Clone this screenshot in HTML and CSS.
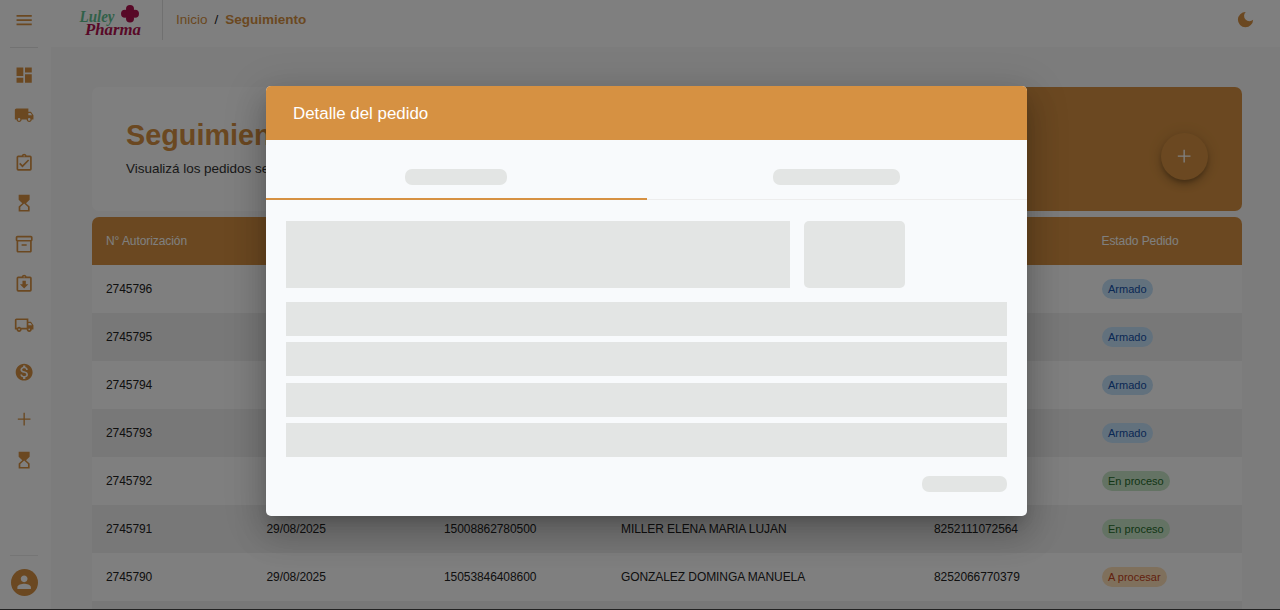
FILE: index.html
```html
<!DOCTYPE html>
<html lang="es">
<head>
<meta charset="utf-8">
<title>Seguimiento</title>
<link rel="stylesheet" href="styles.css">
</head>
<body>
<div class="app">
  <aside class="sidebar">
    <div class="menu"><svg class="icon" viewBox="0 0 24 24"><path d="M3 18h18v-2H3v2zm0-5h18v-2H3v2zm0-7v2h18V6H3z"/></svg></div>
    <nav class="nav">
      <a class="nav-item"><svg class="icon" viewBox="0 0 24 24"><path d="M3 13h8V3H3v10zm0 8h8v-6H3v6zm10 0h8V11h-8v10zm0-18v6h8V3h-8z"/></svg></a>
      <a class="nav-item"><svg class="icon" viewBox="0 0 24 24"><path d="M20 8h-3V4H3c-1.100 0-2 .9-2 2v11h2c0 1.660 1.340 3 3 3s3-1.340 3-3h6c0 1.660 1.340 3 3 3s3-1.340 3-3h2v-5l-3-4zM6 18.500c-.83 0-1.500-.67-1.500-1.500s.67-1.500 1.500-1.500 1.500.67 1.500 1.500-.67 1.500-1.500 1.500zm13.500-9l1.960 2.500H17V9.500h2.500zm-1.500 9c-.83 0-1.500-.67-1.500-1.500s.67-1.500 1.500-1.500 1.500.67 1.500 1.500-.67 1.500-1.500 1.500z"/></svg></a>
      <a class="nav-item group"><svg class="icon" viewBox="0 0 24 24"><path d="M18 9l-1.400-1.400-6.600 6.600-2.600-2.600L6 13l4 4zM19 3h-4.180C14.400 1.840 13.300 1 12 1s-2.400.84-2.820 2H5a2 2 0 0 0-2 2v14a2 2 0 0 0 2 2h14a2 2 0 0 0 2-2V5a2 2 0 0 0-2-2zm-7-.25a.75.75 0 1 1 0 1.500.75.75 0 0 1 0-1.500zM19 19H5V5h14v14z"/></svg></a>
      <a class="nav-item"><svg class="icon" viewBox="0 0 24 24"><path fill-rule="evenodd" d="M5.500 2v6l4.300 4-4.300 4v6h13v-6l-4.300-4 4.300-4V2h-13zm11 14.700V20h-9v-3.300l4.500-4.200 4.500 4.200z"/></svg></a>
      <a class="nav-item"><svg class="icon" viewBox="0 0 24 24"><path fill-rule="evenodd" d="M20 2H4c-1 0-2 .9-2 2v3.010c0 .72.430 1.340 1 1.690V20c0 1.100 1.100 2 2 2h14c.9 0 2-.9 2-2V8.700c.57-.35 1-.97 1-1.690V4c0-1.100-1-2-2-2zm-1 18H5V9h14v11zm1-13H4V4h16v3zM9 12h6v2H9z"/></svg></a>
      <a class="nav-item"><svg class="icon" viewBox="0 0 24 24"><path d="M17 12h-3V8h-4v4H7l5 5 5-5zM19 3h-4.180C14.400 1.840 13.300 1 12 1s-2.400.84-2.820 2H5a2 2 0 0 0-2 2v14a2 2 0 0 0 2 2h14a2 2 0 0 0 2-2V5a2 2 0 0 0-2-2zm-7-.25a.75.75 0 1 1 0 1.500.75.75 0 0 1 0-1.500zM19 19H5V5h14v14z"/></svg></a>
      <a class="nav-item"><svg class="icon" viewBox="0 0 24 24"><path d="M20 8h-3V4H3c-1.100 0-2 .9-2 2v11h2c0 1.660 1.340 3 3 3s3-1.340 3-3h6c0 1.660 1.340 3 3 3s3-1.340 3-3h2v-5l-3-4zm-.5 1.500l1.960 2.500H17V9.500h2.500zM6 18c-.55 0-1-.45-1-1s.45-1 1-1 1 .45 1 1-.45 1-1 1zm2.220-3c-.55-.61-1.330-1-2.220-1s-1.670.39-2.220 1H3V6h12v9H8.220zM18 18c-.55 0-1-.45-1-1s.45-1 1-1 1 .45 1 1-.45 1-1 1z"/></svg></a>
      <a class="nav-item group"><svg class="icon" viewBox="0 0 24 24"><path d="M12 2C6.480 2 2 6.480 2 12s4.480 10 10 10 10-4.480 10-10S17.520 2 12 2zm1.410 16.090V20h-2.670v-1.930c-1.710-.36-3.160-1.460-3.270-3.400h1.960c.1 1.050.82 1.870 2.650 1.870 1.960 0 2.400-.98 2.400-1.590 0-.83-.44-1.610-2.670-2.140-2.480-.6-4.180-1.620-4.180-3.670 0-1.720 1.390-2.840 3.110-3.210V4h2.670v1.950c1.860.45 2.790 1.860 2.850 3.390H14.300c-.05-1.110-.64-1.870-2.220-1.870-1.500 0-2.400.68-2.400 1.640 0 .84.65 1.390 2.670 1.910s4.180 1.390 4.180 3.910c-.01 1.830-1.380 2.830-3.120 3.160z"/></svg></a>
      <a class="nav-item group"><svg class="icon" viewBox="0 0 24 24"><path d="M19.500 12.800h-6.700v6.700h-1.600v-6.700H4.500v-1.600h6.700V4.500h1.600v6.700h6.700v1.600z"/></svg></a>
      <a class="nav-item"><svg class="icon" viewBox="0 0 24 24"><path fill-rule="evenodd" d="M5.500 2v6l4.300 4-4.300 4v6h13v-6l-4.300-4 4.300-4V2h-13zm11 14.700V20h-9v-3.300l4.500-4.200 4.500 4.200z"/></svg></a>
    </nav>
    <div class="profile"><div class="avatar"><svg class="icon" viewBox="0 0 24 24"><path d="M12 12c2.210 0 4-1.790 4-4s-1.790-4-4-4-4 1.790-4 4 1.790 4 4 4zm0 2c-2.670 0-8 1.340-8 4v2h16v-2c0-2.660-5.330-4-8-4z"/></svg></div></div>
  </aside>
  <div class="content">
    <header class="topbar">
      <div class="brand">
        <svg class="logo" viewBox="0 0 66 40" width="66" height="40">
          <text class="logo-luley" x="1.500" y="21.500" textLength="35" lengthAdjust="spacingAndGlyphs">Luley</text>
          <text class="logo-pharma" x="7" y="35" textLength="56" lengthAdjust="spacingAndGlyphs">Pharma</text>
          <g class="logo-cross"><circle cx="52" cy="9" r="4"/><circle cx="52" cy="18.500" r="4"/><circle cx="47" cy="13.700" r="4"/><circle cx="57" cy="13.700" r="4"/><circle cx="52" cy="13.700" r="4"/></g>
        </svg>
      </div>
      <div class="crumbs"><span class="crumb">Inicio</span><span class="slash">/</span><b class="crumb">Seguimiento</b></div>
      <svg class="moon" viewBox="0 0 17 17"><path d="M8.700 1.050A7.600 7.600 0 1 0 16.100 8.700A5.200 5.200 0 0 1 8.700 1.050z"/></svg>
    </header>
    <main class="main">
      <section class="hero">
        <div class="hero-text"><h1>Seguimiento</h1><p>Visualizá los pedidos según su estado</p></div>
        <div class="hero-art"><button class="fab"><svg viewBox="0 0 24 24"><path d="M19.500 12.800h-6.700v6.700h-1.600v-6.700H4.500v-1.600h6.700V4.500h1.600v6.700h6.700v1.600z"/></svg></button></div>
      </section>
      <section class="table">
        <div class="row head"><span>N° Autorización</span><span></span><span></span><span></span><span></span><span>Estado Pedido</span></div>
        <div class="row"><span>2745796</span><span></span><span></span><span></span><span></span><span><i class="chip blue">Armado</i></span></div>
        <div class="row alt"><span>2745795</span><span></span><span></span><span></span><span></span><span><i class="chip blue">Armado</i></span></div>
        <div class="row"><span>2745794</span><span></span><span></span><span></span><span></span><span><i class="chip blue">Armado</i></span></div>
        <div class="row alt"><span>2745793</span><span></span><span></span><span></span><span></span><span><i class="chip blue">Armado</i></span></div>
        <div class="row"><span>2745792</span><span></span><span></span><span></span><span></span><span><i class="chip green">En proceso</i></span></div>
        <div class="row alt"><span>2745791</span><span>29/08/2025</span><span>15008862780500</span><span>MILLER ELENA MARIA LUJAN</span><span>8252111072564</span><span><i class="chip green">En proceso</i></span></div>
        <div class="row"><span>2745790</span><span>29/08/2025</span><span>15053846408600</span><span>GONZALEZ DOMINGA MANUELA</span><span>8252066770379</span><span><i class="chip orange">A procesar</i></span></div>
        <div class="row alt"></div>
      </section>
    </main>
  </div>
</div>
<div class="backdrop">
  <div class="dialog">
    <div class="dialog-title">Detalle del pedido</div>
    <div class="tabs">
      <div class="tab active"><div class="skeleton pill first"></div></div>
      <div class="tab"><div class="skeleton pill second"></div></div>
    </div>
    <div class="dialog-body">
      <div class="summary"><div class="skeleton wide"></div><div class="skeleton square"></div></div>
      <div class="lines"><div class="skeleton line"></div><div class="skeleton line"></div><div class="skeleton line"></div><div class="skeleton line"></div></div>
      <div class="actions"><div class="skeleton pill action"></div></div>
    </div>
  </div>
</div>
</body>
</html>
```
FILE: styles.css
```css
* { box-sizing: border-box; }
body { margin: 0; height: 610px; overflow: hidden; font-family: "Liberation Sans", Arial, sans-serif; color: #212121; }
.app { display: flex; height: 610px; background: #fff; }
.sidebar { width: 51px; display: flex; flex-direction: column; padding-right: 3px; }
.icon { width: 20.3px; height: 20.3px; display: block; fill: #d69142; }
.menu { height: 48px; display: flex; justify-content: center; padding-top: 9.500px; margin: 0 10px; border-bottom: 1px solid #e4e4e4; }
.nav { padding-top: 6.500px; }
.nav-item { height: 40.6px; display: flex; align-items: center; justify-content: center; }
.nav-item.group { margin-top: 6.700px; }
.profile { margin: auto 10px 0; height: 55px; padding-top: 13px; border-top: 1px solid #eaeaea; display: flex; justify-content: center; }
.avatar { width: 27px; height: 27px; border-radius: 50%; background: #d69142; display: flex; align-items: center; justify-content: center; flex: none; }
.avatar .icon { fill: #fff; }
.content { flex: 1; display: flex; flex-direction: column; }
.topbar { height: 47px; display: flex; align-items: flex-start; }
.brand { width: 112px; height: 40px; padding-left: 27px; border-right: 1px solid #e0e0e0; }
.logo { display: block; }
.logo-luley, .logo-pharma { font: italic bold 16px "Liberation Serif", serif; }
.logo-luley { fill: #63c292; }
.logo-pharma { fill: #b0124e; }
.logo-cross { fill: #b0124e; }
.crumbs { display: flex; gap: 7px; padding: 11px 0 0 13px; font-size: 13.5px; line-height: 18px; }
.crumb { color: #d69142; }
.moon { width: 17px; height: 17px; margin: 11px 26px 0 auto; fill: #d69142; }
.main { flex: 1; background: #f8f8f8; padding: 40px 38px 0 41px; }
.hero { height: 124px; display: flex; border-radius: 7px; overflow: hidden; background: #fff; }
.hero-text { width: 575px; padding: 31px 34px 0; }
.hero-text h1 { margin: 0; font-size: 28.8px; line-height: 34px; color: #d69142; }
.hero-text p { margin: 8px 0 0; font-size: 13.500px; line-height: 18px; color: #333; letter-spacing: -.03px; }
.hero-art { flex: 1; background: #d69142; display: flex; align-items: center; justify-content: flex-end; padding: 14px 34px 0 0; }
.fab { width: 47px; height: 47px; border: 0; padding: 0; border-radius: 50%; background: #d69142; display: flex; align-items: center; justify-content: center; box-shadow: 0 3px 4px -1px rgba(0,0,0,.22), 0 5px 9px rgba(0,0,0,.15), 0 1px 15px rgba(0,0,0,.12); }
.fab svg { width: 20.300px; height: 20.300px; fill: #fff; }
.table { margin-top: 6px; border-radius: 7px 7px 0 0; overflow: hidden; height: 393px; }
.row { height: 48px; padding-left: 14px; display: grid; grid-template-columns: 160.500px 177.500px 177px 313px 167.500px 1fr; align-items: center; background: #fff; font-size: 12px; letter-spacing: -.08px; white-space: nowrap; }
.row.alt { background: #f1f1f1; }
.row.head { background: #d69142; color: #fff; }
.chip { display: inline-block; height: 20px; line-height: 20px; padding: 0 6.500px; border-radius: 10px; font-size: 11px; font-style: normal; letter-spacing: 0; vertical-align: middle; }
.chip.blue { background: #c4e2fb; color: #1450a8; }
.chip.green { background: #c8e6c9; color: #256b2a; }
.chip.orange { background: #ffe0b8; color: #c54420; }
.backdrop { position: absolute; inset: 0; background: rgba(0,0,0,.5); border-bottom: 1px solid #222; display: flex; justify-content: center; align-items: flex-start; padding: 86px 0 0 13px; }
.dialog { width: 761px; height: 430px; border-radius: 5px; overflow: hidden; background: #f8fafc; box-shadow: 0 9px 13px -6px rgba(0,0,0,.2), 0 20px 32px 3px rgba(0,0,0,.14), 0 8px 39px 7px rgba(0,0,0,.12); }
.dialog-title { height: 54px; background: #d69142; color: #fff; font-size: 16.900px; line-height: 55px; padding-left: 27px; }
.tabs { height: 60px; display: flex; box-shadow: inset 0 -1px #ededed; }
.tab { flex: 1; display: flex; justify-content: center; padding-top: 29px; }
.tab.active { border-bottom: 2px solid #d69142; }
.skeleton { background: #e3e5e4; }
.pill { height: 16px; border-radius: 7px; }
.pill.first { width: 102px; }
.pill.second { width: 127px; }
.dialog-body { padding: 21px 20px 0; }
.summary { display: flex; gap: 14px; height: 67px; }
.wide { width: 504px; }
.square { width: 101px; border-radius: 5px; }
.lines { margin-top: 14px; display: flex; flex-direction: column; gap: 6.700px; }
.line { height: 33.800px; }
.actions { margin-top: 19px; display: flex; justify-content: flex-end; }
.action { width: 85px; }
```
